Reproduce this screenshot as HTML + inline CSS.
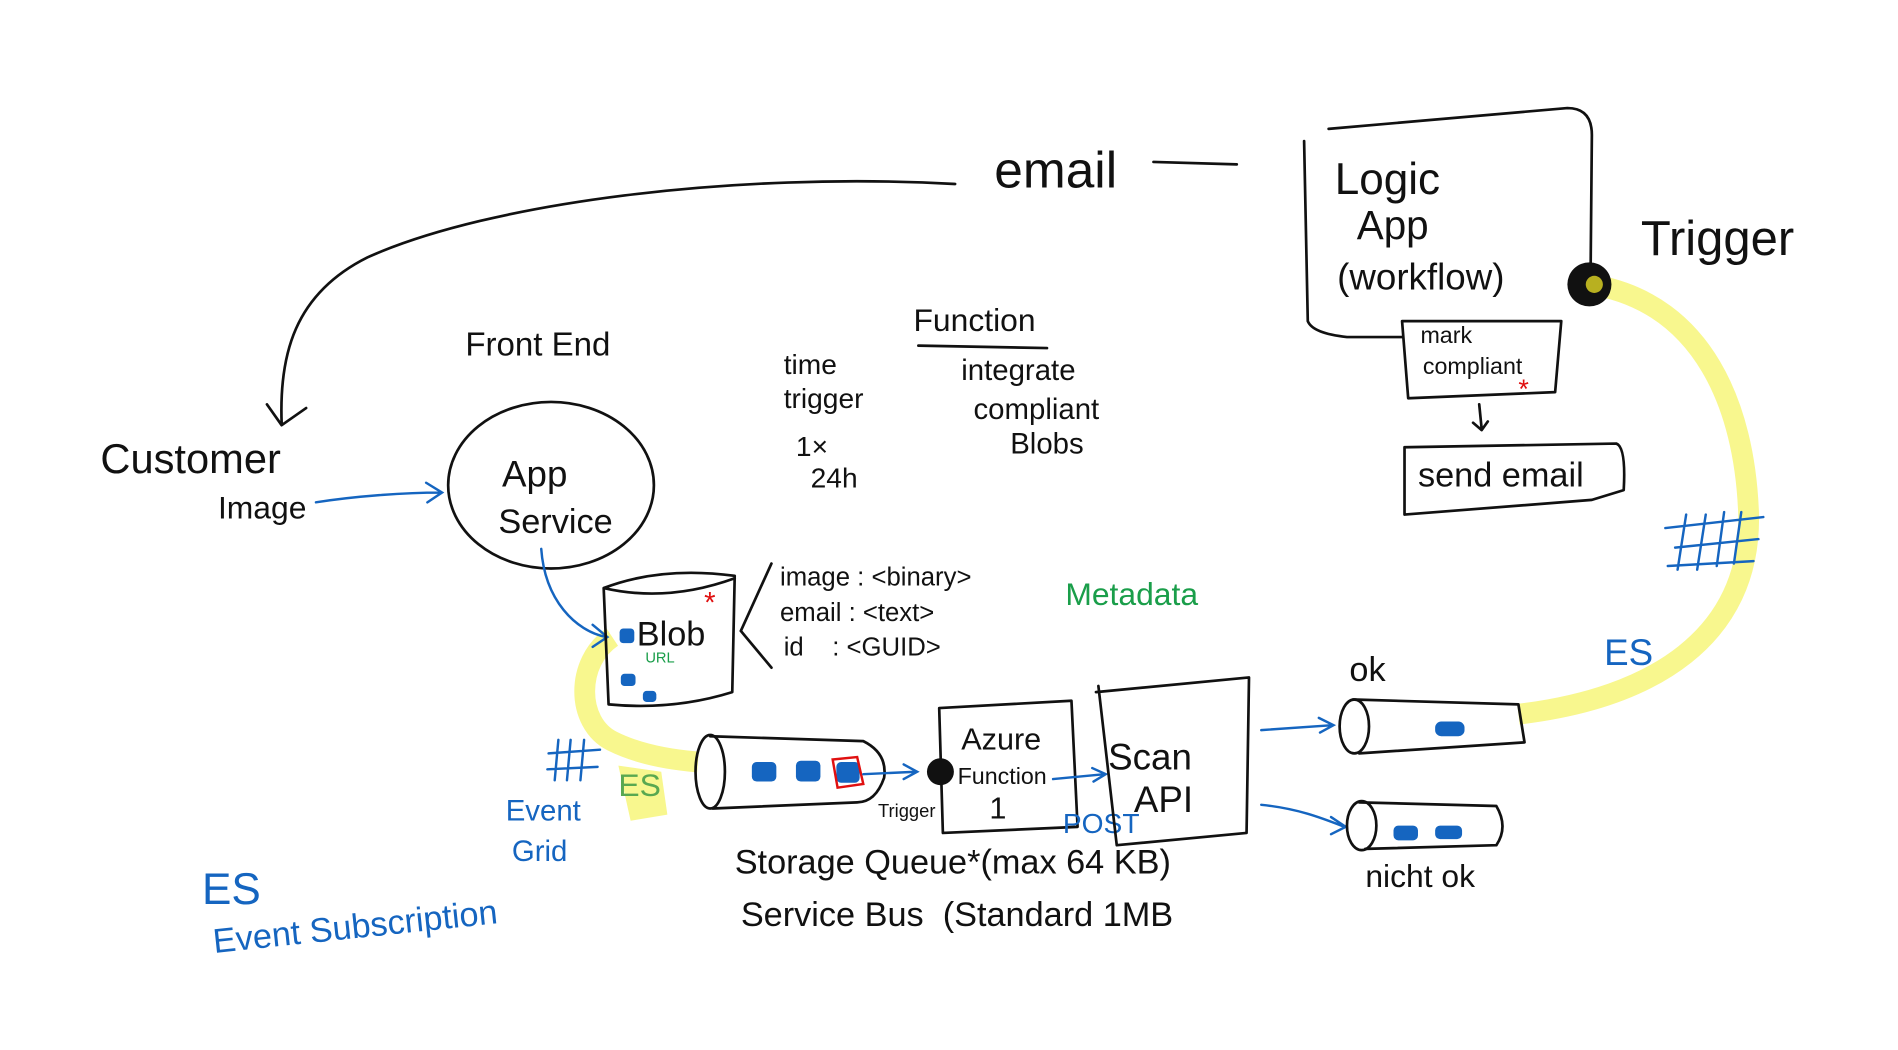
<!DOCTYPE html>
<html><head><meta charset="utf-8"><style>
html,body{margin:0;padding:0;background:#fff;width:1898px;height:1050px;overflow:hidden}
svg{display:block}
text{font-family:"Liberation Sans",sans-serif;}
.k{fill:#111}.b{fill:#1565c0}.g{fill:#1a9e4a}
.s{fill:none;stroke:#111;stroke-width:2.2;stroke-linecap:round;stroke-linejoin:round}
.sb{fill:none;stroke:#1565c0;stroke-width:2;stroke-linecap:round}
</style></head><body>
<svg width="1898" height="1050" viewBox="0 0 1550 857" xmlns="http://www.w3.org/2000/svg">
<path d="M1305 233 C1390 250 1425 330 1428 420 C1430 520 1350 570 1240 583" fill="none" stroke="#f8f78e" stroke-width="17"/>
<path d="M500 520 C470 540 470 590 500 605 C520 615 545 620 570 622" fill="none" stroke="#f8f78e" stroke-width="17"/>
<path d="M505 625 L540 630 L545 665 L515 670 Z" fill="#f8f78e"/>

<text x="812" y="153" class="k" font-size="42">email</text>
<path class="s" d="M942 132 L1010 134"/>
<path class="s" d="M780 150 C600 140 400 165 300 210 C240 240 228 290 230 345 M218 330 L230 347 L250 333"/>

<path class="s" d="M1085 105 L1280 88 Q1300 88 1300 110 L1299 218"/>
<path class="s" d="M1065 115 L1068 262 Q1072 272 1100 275 L1145 275"/>
<text x="1090" y="158" class="k" font-size="36">Logic</text>
<text x="1108" y="195" class="k" font-size="33">App</text>
<text x="1092" y="236" class="k" font-size="30">(workflow)</text>
<circle cx="1298" cy="232" r="18" fill="#111"/>
<circle cx="1302" cy="232" r="7" fill="#b8b020"/>
<text x="1340" y="208" class="k" font-size="40">Trigger</text>
<path class="s" d="M1145 262 L1275 262 L1270 320 L1150 325 Z"/>
<text x="1160" y="280" class="k" font-size="19">mark</text>
<text x="1162" y="305" class="k" font-size="19">compliant</text>
<text x="1240" y="325" fill="#e01010" font-size="22">*</text>
<path class="s" d="M1208 330 L1210 350 M1203 345 L1210 351 L1215 344"/>
<path class="s" d="M1147 365 L1320 362 Q1328 365 1326 400 L1300 408 L1147 420 Z"/>
<text x="1158" y="397" class="k" font-size="28">send email</text>
<path class="sb" d="M1360 431 L1440 422 M1368 447 L1436 440 M1362 462 L1432 458 M1377 420 L1370 465 M1393 420 L1386 465 M1408 418 L1402 462 M1422 418 L1416 460"/>
<text x="1310" y="543" class="b" font-size="30">ES</text>

<text x="380" y="290" class="k" font-size="27">Front End</text>
<ellipse cx="450" cy="396" rx="84" ry="68" class="s"/>
<text x="410" y="397" class="k" font-size="30">App</text>
<text x="407" y="435" class="k" font-size="28">Service</text>
<text x="82" y="386" class="k" font-size="34">Customer</text>
<text x="178" y="423" class="k" font-size="26">Image</text>
<path class="sb" d="M258 410 C290 405 330 402 360 402 M348 394 L361 402 L349 410"/>
<path class="sb" d="M442 448 C445 490 470 515 495 520 M484 510 L496 520 L484 528"/>

<text x="640" y="305" class="k" font-size="23">time</text>
<text x="640" y="333" class="k" font-size="23">trigger</text>
<text x="650" y="372" class="k" font-size="23">1×</text>
<text x="662" y="398" class="k" font-size="23">24h</text>
<text x="746" y="270" class="k" font-size="26">Function</text>
<path class="s" d="M750 282 L855 284"/>
<text x="785" y="310" class="k" font-size="24">integrate</text>
<text x="795" y="342" class="k" font-size="24">compliant</text>
<text x="825" y="370" class="k" font-size="24">Blobs</text>

<path class="s" d="M493 480 Q540 462 600 470 L598 565 Q550 580 497 575 Z M493 480 Q545 492 600 472"/>
<text x="520" y="527" class="k" font-size="28">Blob</text>
<text x="527" y="541" class="g" font-size="12">URL</text>
<rect x="506" y="513" width="12" height="12" rx="3" fill="#1565c0"/>
<rect x="507" y="550" width="12" height="10" rx="3" fill="#1565c0"/>
<rect x="525" y="564" width="11" height="9" rx="3" fill="#1565c0"/>
<text x="575" y="500" fill="#e01010" font-size="24">*</text>
<path class="s" d="M605 515 L630 460 M605 515 L630 545"/>
<text x="637" y="478" class="k" font-size="21">image : &lt;binary&gt;</text>
<text x="637" y="507" class="k" font-size="21">email : &lt;text&gt;</text>
<text x="640" y="535" class="k" font-size="21">id&#160;&#160;&#160;&#160;: &lt;GUID&gt;</text>
<text x="870" y="494" class="g" font-size="26">Metadata</text>

<path class="sb" d="M448 615 L490 612 M447 628 L488 626 M456 604 L453 637 M466 604 L463 637 M477 604 L474 637"/>
<text x="505" y="650" fill="#59a850" font-size="26">ES</text>
<text x="413" y="670" class="b" font-size="24">Event</text>
<text x="418" y="703" class="b" font-size="24">Grid</text>
<text x="165" y="738" class="b" font-size="36">ES</text>
<text x="175" y="778" class="b" font-size="28" transform="rotate(-6 175 778)">Event Subscription</text>

<path class="s" d="M580 601 L705 605 Q725 615 722 635 Q715 655 700 655 L582 660"/>
<ellipse cx="580" cy="630" rx="12" ry="30" class="s"/>
<rect x="614" y="622" width="20" height="16" rx="4" fill="#1565c0"/>
<rect x="650" y="621" width="20" height="17" rx="4" fill="#1565c0"/>
<rect x="683" y="622" width="19" height="17" rx="4" fill="#1565c0"/>
<path d="M680 620 L700 618 L705 640 L684 643 Z" fill="none" stroke="#e01010" stroke-width="2"/>
<path class="sb" d="M705 632 L748 630 M738 624 L749 630 L738 636"/>
<text x="717" y="667" class="k" font-size="15">Trigger</text>

<path class="s" d="M767 578 L875 572 L880 675 L770 680 Z"/>
<circle cx="768" cy="630" r="11" fill="#111"/>
<text x="785" y="612" class="k" font-size="25">Azure</text>
<text x="782" y="640" class="k" font-size="19">Function</text>
<text x="808" y="668" class="k" font-size="25">1</text>
<path class="sb" d="M860 636 L902 632 M892 627 L903 632 L893 638"/>
<text x="868" y="680" class="b" font-size="23">POST</text>
<path class="s" d="M895 565 L1020 553 L1018 680 L912 690 L897 560"/>
<text x="905" y="628" class="k" font-size="30">Scan</text>
<text x="926" y="663" class="k" font-size="30">API</text>
<path class="sb" d="M1030 596 L1088 592 M1077 586 L1089 592 L1078 598"/>
<path class="sb" d="M1030 657 C1060 660 1080 668 1098 675 M1087 667 L1099 675 L1087 681"/>

<text x="1102" y="556" class="k" font-size="28">ok</text>
<path class="s" d="M1105 571 L1240 575 L1245 606 L1110 615"/>
<ellipse cx="1106" cy="593" rx="12" ry="22" class="s"/>
<rect x="1172" y="589" width="24" height="12" rx="5" fill="#1565c0"/>
<path class="s" d="M1110 655 L1222 658 Q1232 675 1222 690 L1115 693"/>
<ellipse cx="1112" cy="674" rx="12" ry="20" class="s"/>
<rect x="1138" y="674" width="20" height="12" rx="4" fill="#1565c0"/>
<rect x="1172" y="674" width="22" height="11" rx="4" fill="#1565c0"/>
<text x="1115" y="724" class="k" font-size="26">nicht ok</text>

<text x="600" y="713" class="k" font-size="28">Storage Queue*(max 64 KB)</text>
<text x="605" y="756" class="k" font-size="28">Service Bus&#160;&#160;(Standard 1MB</text>
</svg>
</body></html>
